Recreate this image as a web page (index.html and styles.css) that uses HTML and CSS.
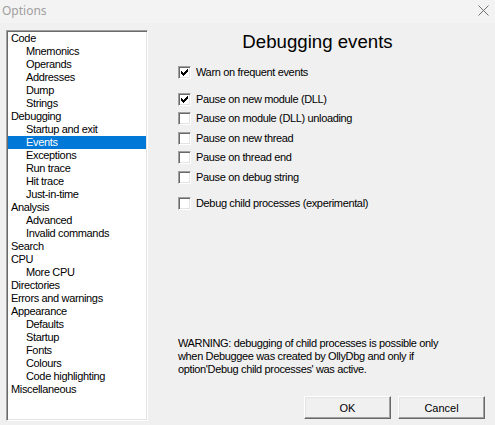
FILE: index.html
```html
<!DOCTYPE html>
<html>
<head>
<meta charset="utf-8">
<title>Options</title>
<link rel="stylesheet" href="styles.css">
</head>
<body>
<div class="window">
  <div class="titlebar">
    <span class="title">Options</span>
    <svg class="close" width="11" height="11" viewBox="0 0 11 11"><path d="M0.5 0.5L10.5 10.5M10.5 0.5L0.5 10.5" stroke="#6f6f6f" stroke-width="1" fill="none"/></svg>
  </div>
  <div class="content">
    <ul class="tree">
      <li class="top">Code</li>
      <li class="sub">Mnemonics</li>
      <li class="sub">Operands</li>
      <li class="sub">Addresses</li>
      <li class="sub">Dump</li>
      <li class="sub">Strings</li>
      <li class="top">Debugging</li>
      <li class="sub">Startup and exit</li>
      <li class="sub selected">Events</li>
      <li class="sub">Exceptions</li>
      <li class="sub">Run trace</li>
      <li class="sub">Hit trace</li>
      <li class="sub">Just-in-time</li>
      <li class="top">Analysis</li>
      <li class="sub">Advanced</li>
      <li class="sub">Invalid commands</li>
      <li class="top">Search</li>
      <li class="top">CPU</li>
      <li class="sub">More CPU</li>
      <li class="top">Directories</li>
      <li class="top">Errors and warnings</li>
      <li class="top">Appearance</li>
      <li class="sub">Defaults</li>
      <li class="sub">Startup</li>
      <li class="sub">Fonts</li>
      <li class="sub">Colours</li>
      <li class="sub">Code highlighting</li>
      <li class="top">Miscellaneous</li>
    </ul>
    <div class="panel">
      <h1 class="heading">Debugging events</h1>
      <div class="checks">
        <div class="check first"><span class="box"><svg width="7" height="7" viewBox="0 0 7 7" shape-rendering="crispEdges"><path d="M6 0h1v1h-1z M5 1h2v1h-2z M0 2h1v1h-1z M4 2h3v1h-3z M0 3h2v1h-2z M3 3h3v1h-3z M0 4h5v1h-5z M1 5h3v1h-3z M2 6h1v1h-1z" fill="#000"/></svg></span><span class="label">Warn on frequent events</span></div>
        <div class="check"><span class="box"><svg width="7" height="7" viewBox="0 0 7 7" shape-rendering="crispEdges"><path d="M6 0h1v1h-1z M5 1h2v1h-2z M0 2h1v1h-1z M4 2h3v1h-3z M0 3h2v1h-2z M3 3h3v1h-3z M0 4h5v1h-5z M1 5h3v1h-3z M2 6h1v1h-1z" fill="#000"/></svg></span><span class="label">Pause on new module (DLL)</span></div>
        <div class="check"><span class="box"></span><span class="label">Pause on module (DLL) unloading</span></div>
        <div class="check"><span class="box"></span><span class="label">Pause on new thread</span></div>
        <div class="check"><span class="box"></span><span class="label">Pause on thread end</span></div>
        <div class="check"><span class="box"></span><span class="label">Pause on debug string</span></div>
        <div class="check last"><span class="box"></span><span class="label">Debug child processes (experimental)</span></div>
      </div>
      <p class="warning">WARNING: debugging of child processes is possible only<br>when Debuggee was created by OllyDbg and only if<br>option'Debug child processes' was active.</p>
      <div class="buttons">
        <button class="btn ok">OK</button>
        <button class="btn cancel">Cancel</button>
      </div>
    </div>
  </div>
</div>
</body>
</html>
```

FILE: styles.css
```css
html, body {
  margin: 0;
  padding: 0;
}
body {
  width: 495px;
  height: 425px;
  overflow: hidden;
  background: #f0f0f0;
  font-family: "Liberation Sans", Arial, sans-serif;
  font-size: 11px;
  letter-spacing: -0.35px;
  color: #000;
}
.window {
  display: flex;
  flex-direction: column;
  height: 425px;
}
.titlebar {
  height: 23px;
  flex: none;
  background: #f3f3f3;
  display: flex;
  align-items: center;
  justify-content: space-between;
  padding: 0 6px 0 2px;
}
.title {
  font-family: "Noto Sans", "Open Sans", sans-serif;
  font-size: 12px;
  letter-spacing: 0;
  color: #9f9f9f;
  line-height: 16px;
  margin-top: -1px;
}
.close {
  display: block;
  margin-top: -2px;
}
.content {
  flex: 1;
  display: flex;
  min-height: 0;
}
.tree {
  list-style: none;
  margin: 7px 0 0 6px;
  padding: 1px;
  width: 142px;
  height: 391px;
  box-sizing: border-box;
  background: #fff;
  border: 1px solid;
  border-color: #a0a0a0 #ffffff #ffffff #a0a0a0;
  box-shadow: inset 1px 1px 0 #696969, inset -1px -1px 0 #e3e3e3;
  flex: none;
}
.tree li {
  height: 13px;
  line-height: 13px;
  white-space: nowrap;
}
.tree .top {
  padding-left: 3px;
}
.tree .sub {
  padding-left: 18px;
}
.tree .selected {
  background: #0078d7;
  color: #fff;
}
.panel {
  flex: 1;
  display: flex;
  flex-direction: column;
  padding: 8px 8px 6px 0;
  min-width: 0;
}
.heading {
  margin: 0;
  font-size: 18.67px;
  line-height: 21px;
  font-weight: normal;
  letter-spacing: 0;
  text-align: center;
  font-family: "Liberation Sans", Arial, sans-serif;
}
.checks {
  margin: 14px 0 0 30px;
}
.check {
  display: flex;
  align-items: flex-start;
  height: 19.4px;
}
.check.first {
  height: 27px;
}
.check.last {
  margin-top: 7px;
}
.box {
  width: 13px;
  height: 13px;
  box-sizing: border-box;
  flex: none;
  background: #fff;
  border: 1px solid;
  border-color: #a0a0a0 #ffffff #ffffff #a0a0a0;
  box-shadow: inset 1px 1px 0 #696969, inset -1px -1px 0 #e3e3e3;
  padding: 2px 0 0 2px;
}
.box svg {
  display: block;
}
.label {
  margin-left: 5px;
  line-height: 13px;
  white-space: nowrap;
}
.warning {
  margin: auto 0 0 30px;
  line-height: 13px;
}
.buttons {
  margin-top: 20px;
  display: flex;
  justify-content: flex-end;
  gap: 7px;
  margin-right: 2px;
}
.btn {
  width: 87px;
  height: 23px;
  box-sizing: border-box;
  font-family: "Liberation Sans", Arial, sans-serif;
  font-size: 11px;
  letter-spacing: 0;
  color: #000;
  background: #f0f0f0;
  border: 1px solid;
  border-color: #ffffff #696969 #696969 #ffffff;
  box-shadow: inset -1px -1px 0 #a0a0a0, inset 1px 1px 0 #e3e3e3;
  padding: 0;
  margin: 0;
}
```
